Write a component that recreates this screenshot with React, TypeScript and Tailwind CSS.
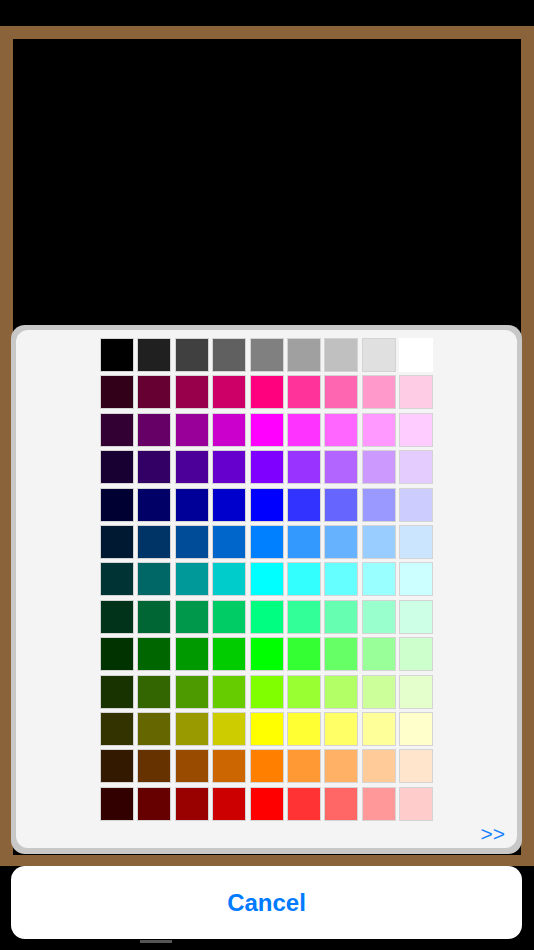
import React from "react";

const rows: string[][] = [
  ["#000000", "#202020", "#404040", "#606060", "#808080", "#a0a0a0", "#c0c0c0", "#e0e0e0", "#ffffff"],
  ["#330019", "#660033", "#99004c", "#cc0066", "#ff007f", "#ff3399", "#ff66b2", "#ff99cc", "#ffcce5"],
  ["#330033", "#660066", "#990099", "#cc00cc", "#ff00ff", "#ff33ff", "#ff66ff", "#ff99ff", "#ffccff"],
  ["#190033", "#330066", "#4c0099", "#6600cc", "#7f00ff", "#9933ff", "#b266ff", "#cc99ff", "#e5ccff"],
  ["#000033", "#000066", "#000099", "#0000cc", "#0000ff", "#3333ff", "#6666ff", "#9999ff", "#ccccff"],
  ["#001933", "#003366", "#004c99", "#0066cc", "#0080ff", "#3399ff", "#66b2ff", "#99ccff", "#cce5ff"],
  ["#003333", "#006666", "#009999", "#00cccc", "#00ffff", "#33ffff", "#66ffff", "#99ffff", "#ccffff"],
  ["#003319", "#006633", "#00994c", "#00cc66", "#00ff80", "#33ff99", "#66ffb2", "#99ffcc", "#ccffe5"],
  ["#003300", "#006600", "#009900", "#00cc00", "#00ff00", "#33ff33", "#66ff66", "#99ff99", "#ccffcc"],
  ["#193300", "#336600", "#4c9900", "#66cc00", "#80ff00", "#99ff33", "#b2ff66", "#ccff99", "#e5ffcc"],
  ["#333300", "#666600", "#999900", "#cccc00", "#ffff00", "#ffff33", "#ffff66", "#ffff99", "#ffffcc"],
  ["#331900", "#663300", "#994c00", "#cc6600", "#ff8000", "#ff9933", "#ffb266", "#ffcc99", "#ffe5cc"],
  ["#330000", "#660000", "#990000", "#cc0000", "#ff0000", "#ff3333", "#ff6666", "#ff9999", "#ffcccc"],
];

export default function App() {
  return (
    <div
      className="relative w-[534px] h-[950px] bg-black overflow-hidden flex flex-col"
      style={{ fontFamily: '"Liberation Sans", Arial, sans-serif' }}
    >
      <div className="h-[26px] shrink-0" />
      <div className="h-[840px] shrink-0 border-[#8b633a] border-t-[13px] border-l-[13px] border-r-[13px] border-b-[11px] bg-black" />
      <div className="flex-1 relative">
        <div className="absolute left-[140px] top-[74px] w-[32px] h-[3px] bg-[#555555]" />
      </div>

      <div className="absolute left-[11px] top-[325px] w-[511px] flex flex-col gap-[12px]">
        <div className="bg-[#c8c8c8] rounded-[14px] pt-[5px] px-[5px] pb-[6px]">
          <div className="bg-[#f4f4f4] rounded-[12px] h-[518px] flex flex-col items-center pt-[8px]">
            <div className="grid grid-cols-9 gap-[3.4px]">
              {rows.flat().map((c, i) => (
                <div
                  key={i}
                  className="w-[34px] h-[34px] border border-[#d4d4d4]"
                  style={{ backgroundColor: c, borderColor: c === "#ffffff" ? "#ffffff" : undefined }}
                />
              ))}
            </div>
            <div className="w-full flex-1 flex items-center justify-end pr-[12px] pb-[2px]">
              <span className="text-[21px] leading-none text-[#1a82fb]">&gt;&gt;</span>
            </div>
          </div>
        </div>
        <button className="h-[73px] bg-white rounded-[14px] flex items-center justify-center">
          <span className="text-[24px] font-bold text-[#007aff]">Cancel</span>
        </button>
      </div>
    </div>
  );
}
